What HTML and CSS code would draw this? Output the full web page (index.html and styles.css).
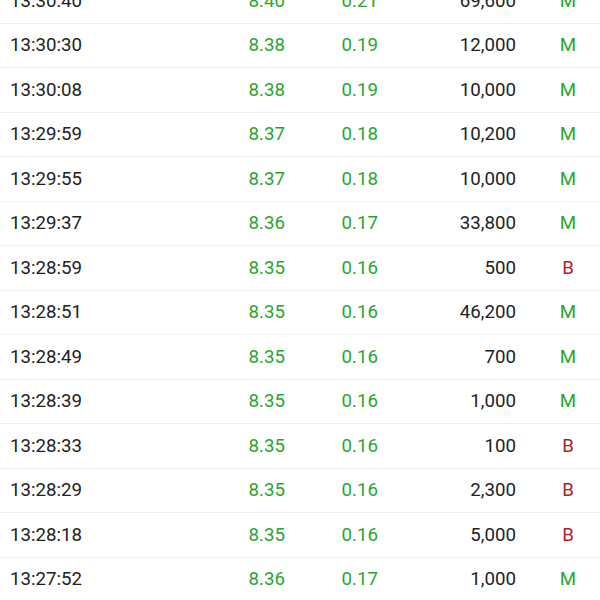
FILE: index.html
```html
<!DOCTYPE html>
<html>
<head>
<meta charset="utf-8">
<link rel="stylesheet" href="styles.css">
</head>
<body>
<div class="list">
  <div class="row"><span class="time">13:30:40</span><span class="num up">8.40</span><span class="num up">0.21</span><span class="num">69,600</span><span class="type m">M</span></div>
  <div class="row"><span class="time">13:30:30</span><span class="num up">8.38</span><span class="num up">0.19</span><span class="num">12,000</span><span class="type m">M</span></div>
  <div class="row"><span class="time">13:30:08</span><span class="num up">8.38</span><span class="num up">0.19</span><span class="num">10,000</span><span class="type m">M</span></div>
  <div class="row"><span class="time">13:29:59</span><span class="num up">8.37</span><span class="num up">0.18</span><span class="num">10,200</span><span class="type m">M</span></div>
  <div class="row"><span class="time">13:29:55</span><span class="num up">8.37</span><span class="num up">0.18</span><span class="num">10,000</span><span class="type m">M</span></div>
  <div class="row"><span class="time">13:29:37</span><span class="num up">8.36</span><span class="num up">0.17</span><span class="num">33,800</span><span class="type m">M</span></div>
  <div class="row"><span class="time">13:28:59</span><span class="num up">8.35</span><span class="num up">0.16</span><span class="num">500</span><span class="type b">B</span></div>
  <div class="row"><span class="time">13:28:51</span><span class="num up">8.35</span><span class="num up">0.16</span><span class="num">46,200</span><span class="type m">M</span></div>
  <div class="row"><span class="time">13:28:49</span><span class="num up">8.35</span><span class="num up">0.16</span><span class="num">700</span><span class="type m">M</span></div>
  <div class="row"><span class="time">13:28:39</span><span class="num up">8.35</span><span class="num up">0.16</span><span class="num">1,000</span><span class="type m">M</span></div>
  <div class="row"><span class="time">13:28:33</span><span class="num up">8.35</span><span class="num up">0.16</span><span class="num">100</span><span class="type b">B</span></div>
  <div class="row"><span class="time">13:28:29</span><span class="num up">8.35</span><span class="num up">0.16</span><span class="num">2,300</span><span class="type b">B</span></div>
  <div class="row"><span class="time">13:28:18</span><span class="num up">8.35</span><span class="num up">0.16</span><span class="num">5,000</span><span class="type b">B</span></div>
  <div class="row"><span class="time">13:27:52</span><span class="num up">8.36</span><span class="num up">0.17</span><span class="num">1,000</span><span class="type m">M</span></div>
</div>
</body>
</html>
```

FILE: styles.css
```css
html, body {
  margin: 0;
  padding: 0;
  background: #ffffff;
  overflow: hidden;
}
body {
  font-family: Roboto, "Noto Sans", sans-serif;
  font-size: 18.7px;
  color: #222222;
}
.list {
  margin-top: -21px;
}
.row {
  display: grid;
  grid-template-columns: 190px 85px 93px 138px 84px;
  padding-left: 10px;
  height: 43.5px;
  align-items: center;
  border-bottom: 1px solid #f0f0f0;
}
.num {
  text-align: right;
}
.up {
  color: #2aa62e;
}
.type {
  text-align: center;
  padding-left: 20px;
}
.m {
  color: #2aa62e;
}
.b {
  color: #b01e2a;
}
```
